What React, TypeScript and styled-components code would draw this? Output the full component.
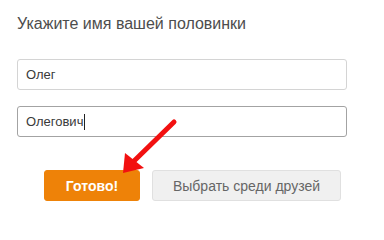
import styled, { createGlobalStyle } from "styled-components";

const GlobalStyle = createGlobalStyle`
  html, body {
    margin: 0;
    padding: 0;
    background: #ffffff;
  }
  body {
    font-family: "Liberation Sans", Arial, sans-serif;
  }
`;

const Page = styled.div`
  position: relative;
  width: 384px;
  height: 215px;
  padding: 14px 0 0 17px;
  box-sizing: border-box;
  overflow: hidden;
`;

const Title = styled.div`
  font-size: 16px;
  line-height: 20px;
  color: #4d4d4d;
  margin-bottom: 25px;
`;

const Fields = styled.div`
  display: flex;
  flex-direction: column;
  gap: 16px;
  width: 330px;
`;

const Field = styled.div<{ $focused?: boolean }>`
  height: 31px;
  box-sizing: border-box;
  border: 1px solid ${(p) => (p.$focused ? "#a3a3a3" : "#d4d4d4")};
  border-radius: 3px;
  padding: 0 8px;
  display: flex;
  align-items: center;
  font-size: 13px;
  color: #3a3a3a;
`;

const Caret = styled.span`
  display: inline-block;
  width: 1px;
  height: 16px;
  background: #222222;
  margin-left: 1px;
`;

const Actions = styled.div`
  display: flex;
  gap: 12px;
  margin: 33px 0 0 27px;
`;

const Button = styled.div<{ $primary?: boolean }>`
  height: 31px;
  box-sizing: border-box;
  border-radius: 3px;
  display: flex;
  align-items: center;
  justify-content: center;
  font-size: 14px;
  width: ${(p) => (p.$primary ? "96px" : "189px")};
  background: ${(p) => (p.$primary ? "#ee8208" : "#f0f0f0")};
  color: ${(p) => (p.$primary ? "#ffffff" : "#666666")};
  font-weight: ${(p) => (p.$primary ? 700 : 400)};
  border: 1px solid ${(p) => (p.$primary ? "#ee8208" : "#e0e0e0")};
`;

const Arrow = styled.svg`
  position: absolute;
  left: 0;
  top: 0;
  pointer-events: none;
`;

export default function App() {
  return (
    <>
      <GlobalStyle />
      <Page>
        <Title>Укажите имя вашей половинки</Title>
        <Fields>
          <Field>Олег</Field>
          <Field $focused>
            Олегович
            <Caret />
          </Field>
        </Fields>
        <Actions>
          <Button $primary>Готово!</Button>
          <Button>Выбрать среди друзей</Button>
        </Actions>
        <Arrow width="384" height="215" viewBox="0 0 384 215">
          <line x1="174" y1="122" x2="133" y2="162" stroke="#f21010" strokeWidth="5" strokeLinecap="round" />
          <polygon points="123,173 125,153 144,168" fill="#f21010" />
        </Arrow>
      </Page>
    </>
  );
}
